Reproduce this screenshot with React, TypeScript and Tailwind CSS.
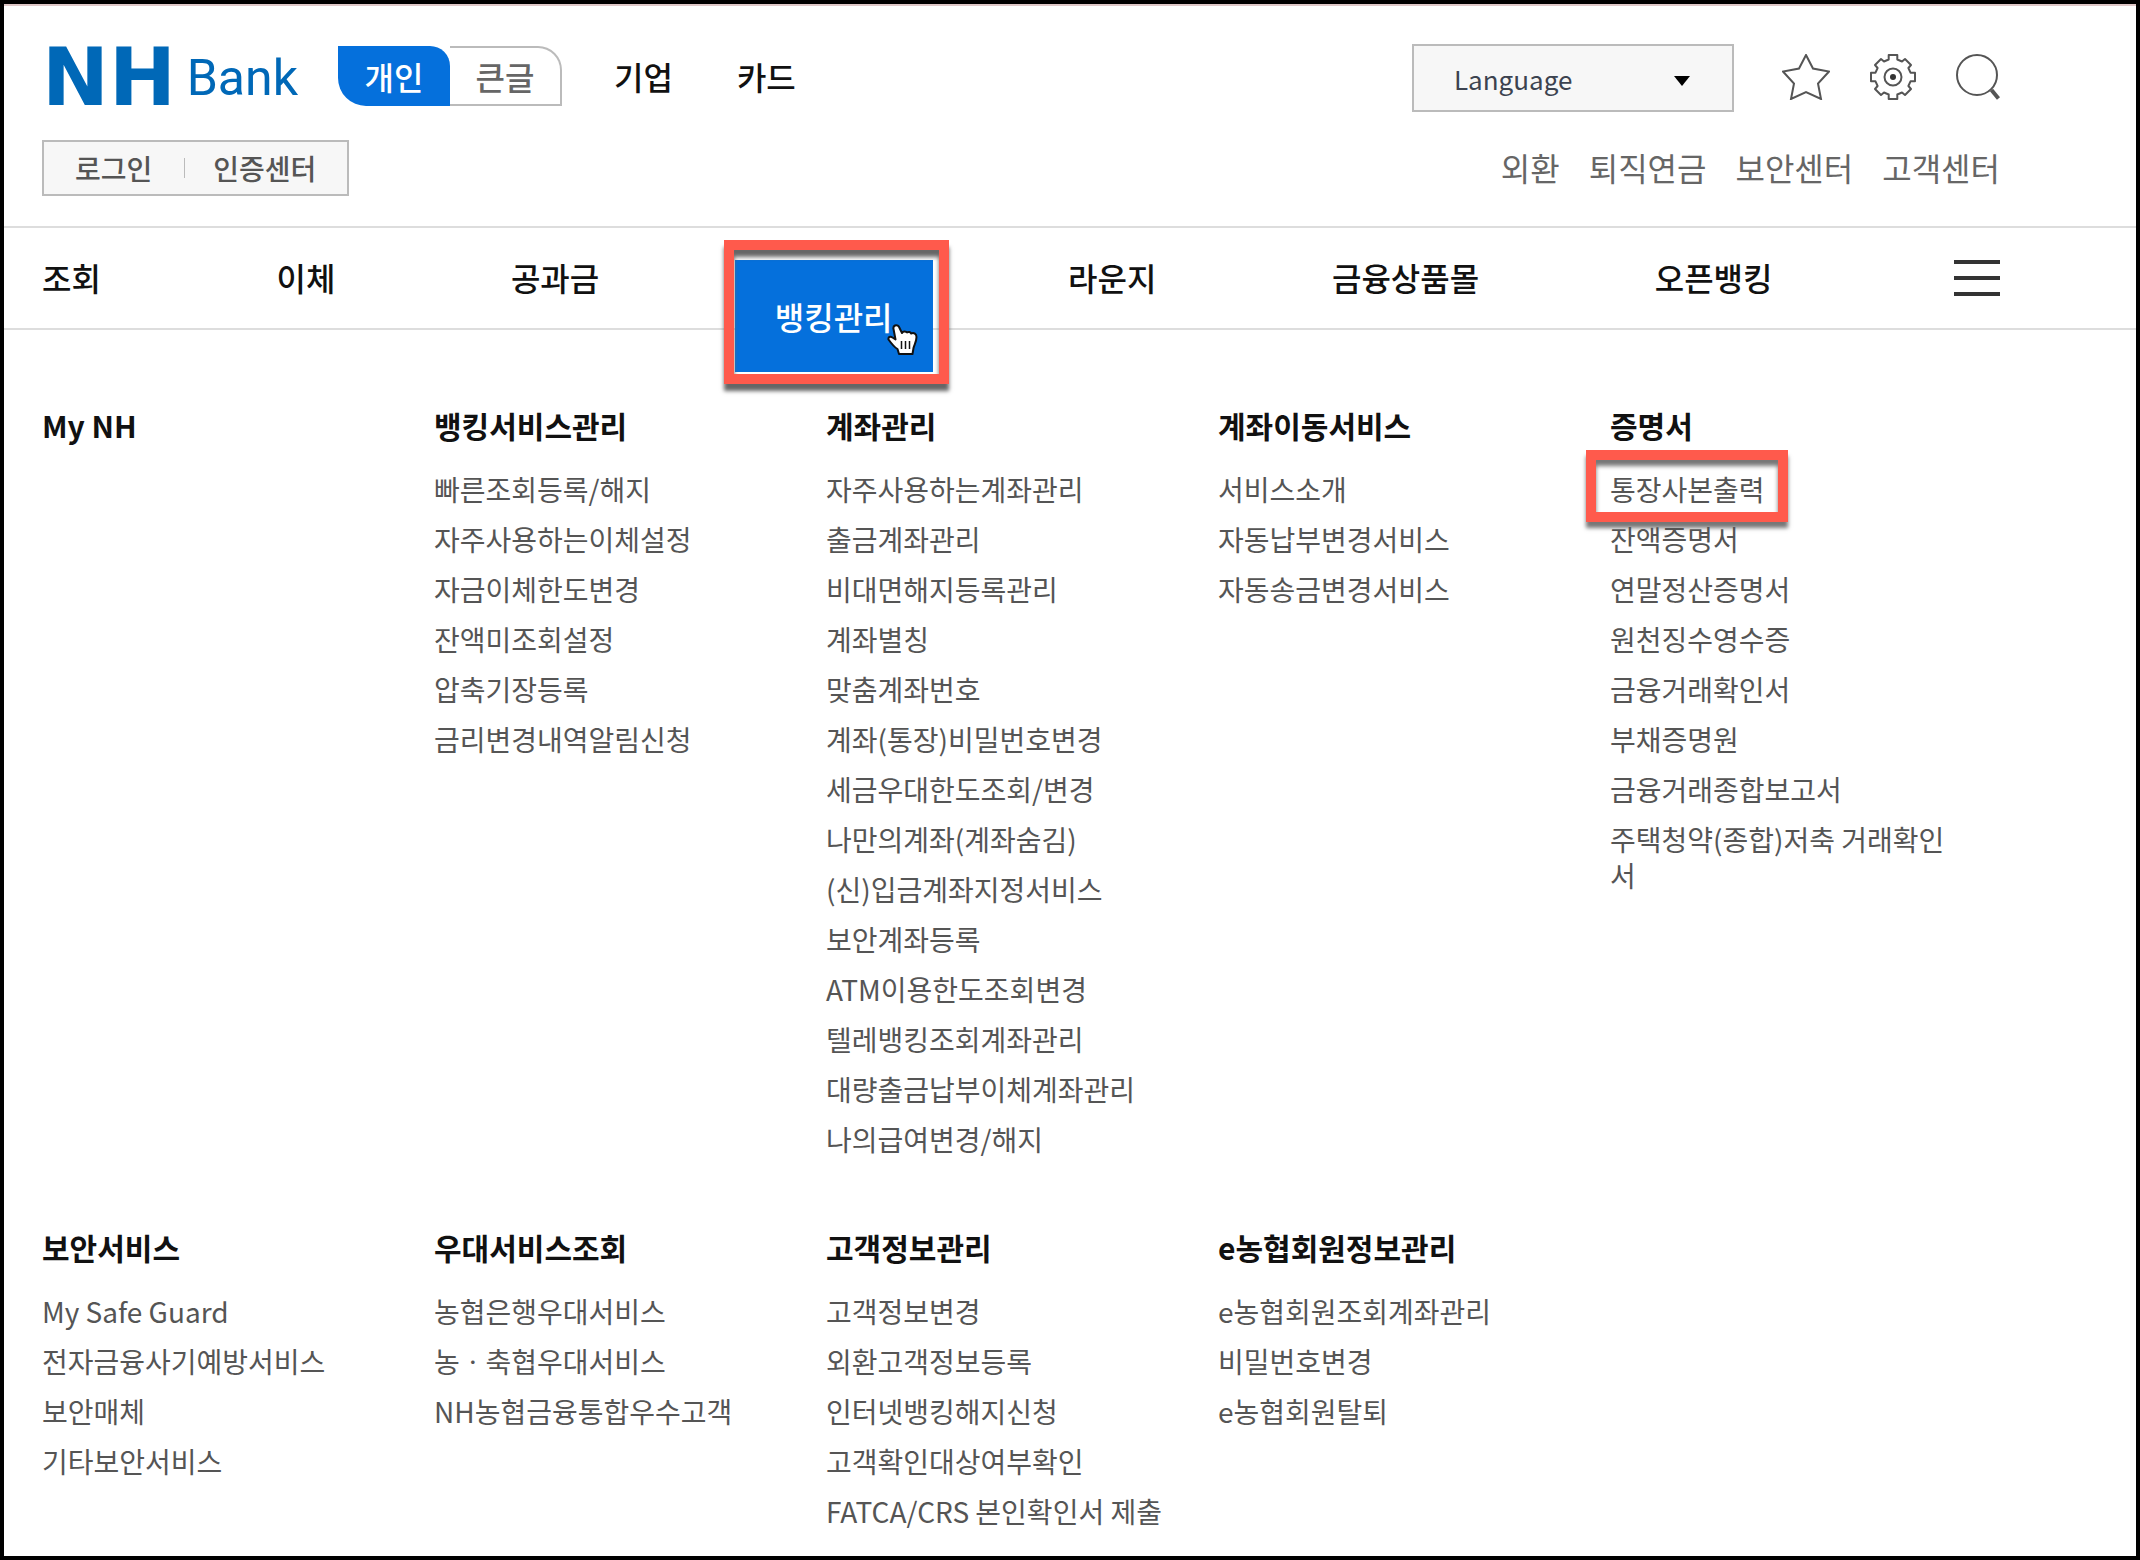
import React from 'react';

type MenuGroup = {
  title: string;
  items: string[];
};

const NAV_ITEMS = ['조회', '이체', '공과금', '뱅킹관리', '라운지', '금융상품몰', '오픈뱅킹'];
const ACTIVE_NAV = '뱅킹관리';
const HIGHLIGHTED_ITEM = '통장사본출력';

const MENU_GROUPS: MenuGroup[] = [
  { title: 'My NH', items: [] },
  {
    title: '뱅킹서비스관리',
    items: ['빠른조회등록/해지', '자주사용하는이체설정', '자금이체한도변경', '잔액미조회설정', '압축기장등록', '금리변경내역알림신청'],
  },
  {
    title: '계좌관리',
    items: [
      '자주사용하는계좌관리',
      '출금계좌관리',
      '비대면해지등록관리',
      '계좌별칭',
      '맞춤계좌번호',
      '계좌(통장)비밀번호변경',
      '세금우대한도조회/변경',
      '나만의계좌(계좌숨김)',
      '(신)입금계좌지정서비스',
      '보안계좌등록',
      'ATM이용한도조회변경',
      '텔레뱅킹조회계좌관리',
      '대량출금납부이체계좌관리',
      '나의급여변경/해지',
    ],
  },
  { title: '계좌이동서비스', items: ['서비스소개', '자동납부변경서비스', '자동송금변경서비스'] },
  {
    title: '증명서',
    items: [
      '통장사본출력',
      '잔액증명서',
      '연말정산증명서',
      '원천징수영수증',
      '금융거래확인서',
      '부채증명원',
      '금융거래종합보고서',
      '주택청약(종합)저축 거래확인서',
    ],
  },
  { title: '보안서비스', items: ['My Safe Guard', '전자금융사기예방서비스', '보안매체', '기타보안서비스'] },
  { title: '우대서비스조회', items: ['농협은행우대서비스', '농ㆍ축협우대서비스', 'NH농협금융통합우수고객'] },
  {
    title: '고객정보관리',
    items: ['고객정보변경', '외환고객정보등록', '인터넷뱅킹해지신청', '고객확인대상여부확인', 'FATCA/CRS 본인확인서 제출'],
  },
  { title: 'e농협회원정보관리', items: ['e농협회원조회계좌관리', '비밀번호변경', 'e농협회원탈퇴'] },
];

const StarIcon = () => (
  <svg className="h-[46px] w-12" viewBox="0 0 48 46" fill="none" stroke="#555" strokeWidth="2">
    <path d="M24 1L31 14.5L47 17.5L36 29.5L39 45L24 38L9 45L12 29.5L1 17.5L17 14.5Z" />
  </svg>
);

const GearIcon = () => (
  <svg className="h-[46px] w-[46px]" viewBox="0 0 46 46" fill="none" stroke="#555" strokeWidth="2" strokeLinejoin="round">
    <path d="M18.7 1H27.3V5.5L32 7.5L35 5L41 11L38.4 14L40.5 18.7H45V27.3H40.5L38.4 32L41 35L35 41L32 38.5L27.3 40.5V45H18.7V40.5L14 38.5L11 41L5 35L7.6 32L5.5 27.3H1V18.7H5.5L7.6 14L5 11L11 5L14 7.5L18.7 5.5Z" />
    <circle cx="23" cy="23" r="8.5" />
    <circle cx="23" cy="23" r="3" fill="#333" stroke="none" />
  </svg>
);

const SearchIcon = () => (
  <svg className="h-[46px] w-11" viewBox="0 0 44 46" fill="none" stroke="#555" strokeWidth="2">
    <circle cx="21" cy="21" r="20" />
    <path d="M35.5 36L42.5 44.5" strokeWidth="4" />
  </svg>
);

const PointerIcon = () => (
  <svg className="pointer-events-none absolute top-[63px] left-[152px] h-[34px] w-8" viewBox="0 0 32 34" fill="#fff" stroke="#111" strokeWidth="2" strokeLinejoin="round">
    <path d="M8 2.5C10 1.5 12 3 12.5 5L15 10C16 8 19 8 20 9.5C21.5 8.5 23.5 9 24 10.5C27 9 29.5 11 29.5 14C29.5 19 27 22 26.5 25L25.5 31H12L10.5 26C7 24 4 20 1.5 16.5C1 14 3 13 5.5 14.5L8.5 16.5L6.5 6C6 4 7 3 8 2.5Z" />
    <path d="M14.5 18v8M18.5 18v8M22.5 18v8" strokeWidth="1.5" />
  </svg>
);

const Header: React.FC = () => (
  <header className="border-t-2 border-[#dfc8c8] pt-[38px] pr-[136px] pb-[30px] pl-[38px]">
    <div className="flex h-[68px] items-center justify-between">
      <div className="flex items-center">
        <a href="#home" className="flex h-14 w-[256px] items-center justify-between leading-none text-[#0068b7]">
          <span className="font-['DejaVu_Sans',sans-serif] text-[80px] font-bold">NH</span>
          <span className="font-[Roboto,sans-serif] text-[50px]">Bank</span>
        </a>
        <div className="flex items-center pb-1 pl-10 text-[32px] font-medium">
          <div className="flex h-[60px]">
            <button type="button" className="w-28 rounded-tr-[20px] rounded-bl-[28px] bg-[#0570dc] text-white">개인</button>
            <button type="button" className="w-28 rounded-tr-[24px] border-2 border-l-0 border-[#bbb] text-[#666]">큰글</button>
          </div>
          <a href="#corporate" className="ml-[52px]">기업</a>
          <a href="#card" className="ml-16">카드</a>
        </div>
      </div>
      <div className="flex items-center">
        <div className="relative mr-12 h-[68px] w-[322px]">
          <select aria-label="Language" className="h-full w-full appearance-none border-2 border-[#bbb] bg-[#f7f7f7] px-10 text-[26px] text-[#3c4350]">
            <option>Language</option>
          </select>
          <svg className="pointer-events-none absolute top-8 right-11 h-[10px] w-4" viewBox="0 0 16 10">
            <path d="M0 0h16l-8 10z" />
          </svg>
        </div>
        <div className="flex gap-10 pb-0.5">
          <button type="button" aria-label="즐겨찾기"><StarIcon /></button>
          <button type="button" aria-label="설정"><GearIcon /></button>
          <button type="button" aria-label="검색"><SearchIcon /></button>
        </div>
      </div>
    </div>
    <div className="mt-7 flex items-center justify-between">
      <div className="flex h-14 items-center border-2 border-[#bbb] bg-[#f7f7f7] px-[31px] text-[28px] font-medium text-[#555]">
        <a href="#login">로그인</a>
        <span className="mr-7 ml-8 h-5 w-px bg-[#bbb]" />
        <a href="#cert">인증센터</a>
      </div>
      <div className="flex gap-[29px] pb-0.5 text-[32px] text-[#666]">
        <a href="#fx">외환</a>
        <a href="#pension">퇴직연금</a>
        <a href="#security">보안센터</a>
        <a href="#support">고객센터</a>
      </div>
    </div>
  </header>
);

const MainNav: React.FC = () => (
  <nav className="flex h-[104px] items-center justify-between border-y-2 border-[#ddd] pr-[136px] pl-[38px] text-[32px] font-medium">
    {NAV_ITEMS.map((item) =>
      item === ACTIVE_NAV ? (
        <div key={item} className="relative z-10 -mx-10 h-9">
          <a href="#manage" className="flex h-28 items-center bg-[#0570dc] px-10 text-white">{item}</a>
          <div className="pointer-events-none absolute -top-5 -right-4 -left-[11px] h-36 border-[10px] border-[#ff5a4c] shadow-[0_7px_4px_#666,inset_0_7px_4px_#666]" />
          <PointerIcon />
        </div>
      ) : (
        <a key={item} href={`#${item}`} className="pb-0.5">{item}</a>
      )
    )}
    <button type="button" aria-label="전체메뉴" className="flex h-9 w-[52px] flex-col justify-between pl-1.5">
      <span className="h-1 w-full bg-[#333]" />
      <span className="h-1 w-full bg-[#333]" />
      <span className="h-1 w-full bg-[#333]" />
    </button>
  </nav>
);

const MenuColumn: React.FC<{ group: MenuGroup }> = ({ group }) => (
  <section className="pr-10">
    <h2 className="text-[30px] leading-[44px] font-bold">{group.title}</h2>
    <ul className="mt-6 flex flex-col gap-[14px] text-[28px] leading-9 text-[#555]">
      {group.items.map((item) => (
        <li key={item} className="relative">
          <a href={`#${item}`}>{item}</a>
          {item === HIGHLIGHTED_ITEM && (
            <div className="pointer-events-none absolute -top-[21px] -left-6 h-[72px] w-[202px] border-[10px] border-[#ff5a4c] shadow-[0_6px_4px_#777,inset_0_6px_4px_#777]" />
          )}
        </li>
      ))}
    </ul>
  </section>
);

export default function App() {
  return (
    <div className="min-h-screen border-4 border-black bg-white font-['Noto_Sans_CJK_KR',sans-serif] text-[#111]">
      <Header />
      <MainNav />
      <main className="grid grid-cols-5 gap-y-[68px] pt-[73px] pr-[134px] pb-6 pl-[38px]">
        {MENU_GROUPS.map((group) => (
          <MenuColumn key={group.title} group={group} />
        ))}
      </main>
    </div>
  );
}
